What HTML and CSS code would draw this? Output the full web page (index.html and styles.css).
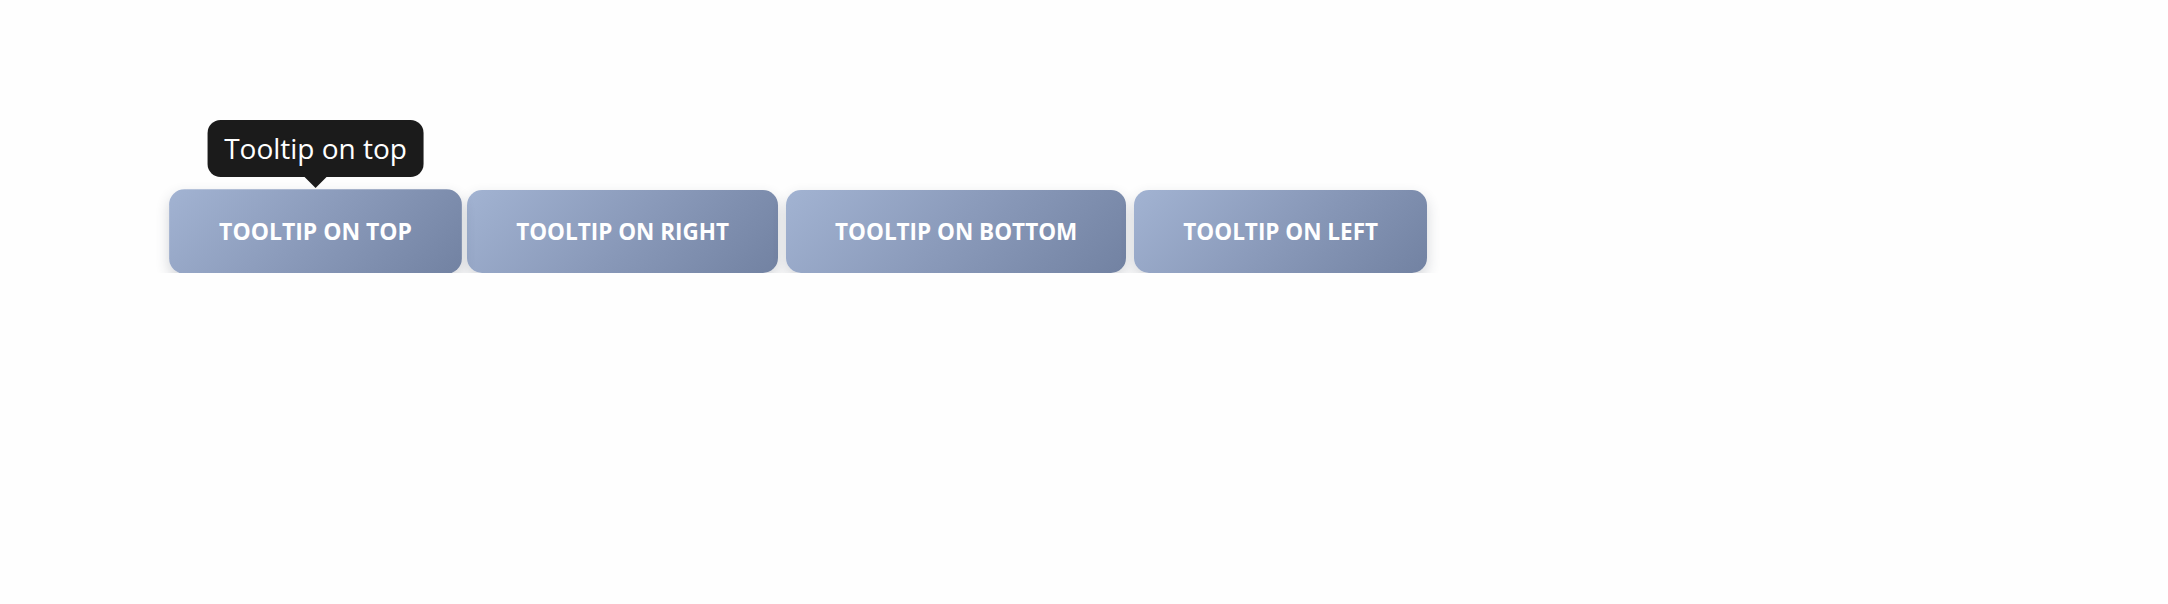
FILE: index.html
```html
<!DOCTYPE html>
<html lang="en">
<head>
<meta charset="utf-8">
<title>Tooltips</title>
<link rel="stylesheet" href="styles.css">
</head>
<body>
<main class="page">
  <div class="row">
    <div class="tip-wrap">
      <button class="btn btn-active">Tooltip on top</button>
      <div class="tooltip">Tooltip on top</div>
    </div>
    <button class="btn">Tooltip on right</button>
    <button class="btn">Tooltip on bottom</button>
    <button class="btn">Tooltip on left</button>
  </div>
</main>
</body>
</html>
```
FILE: styles.css
```css
html, body {
  margin: 0;
  padding: 0;
  background: #fefefe;
}
.page {
  padding: 190px 0 0 172px;
  font-family: "Open Sans", "Noto Sans", sans-serif;
}
.row {
  display: flex;
  gap: 8px;
  align-items: flex-start;
}
.tip-wrap {
  position: relative;
  display: flex;
}
.btn {
  font-family: "Open Sans", "Noto Sans", sans-serif;
  font-weight: 700;
  font-size: 22.5px;
  line-height: 29px;
  text-transform: uppercase;
  color: #ffffff;
  border: none;
  border-radius: 15px;
  padding: 27px 49px;
  background: linear-gradient(135deg, #a2b3d2 0%, #8a9aba 50%, #7282a2 100%);
  box-shadow: 0 6px 14px rgba(40, 50, 70, 0.2);
  cursor: pointer;
  white-space: nowrap;
}
.btn-active {
  transform: scale(1.02);
}
.tooltip {
  position: absolute;
  left: 50%;
  bottom: 100%;
  transform: translateX(-50%);
  margin-bottom: 13px;
  background: #1b1b1b;
  color: #ffffff;
  font-size: 28px;
  line-height: 38px;
  padding: 9px 17px 10px;
  border-radius: 13px;
  white-space: nowrap;
}
.tooltip::after {
  content: "";
  position: absolute;
  left: 50%;
  top: 100%;
  transform: translateX(-50%);
  border-left: 11px solid transparent;
  border-right: 11px solid transparent;
  border-top: 11px solid #1b1b1b;
}
```
